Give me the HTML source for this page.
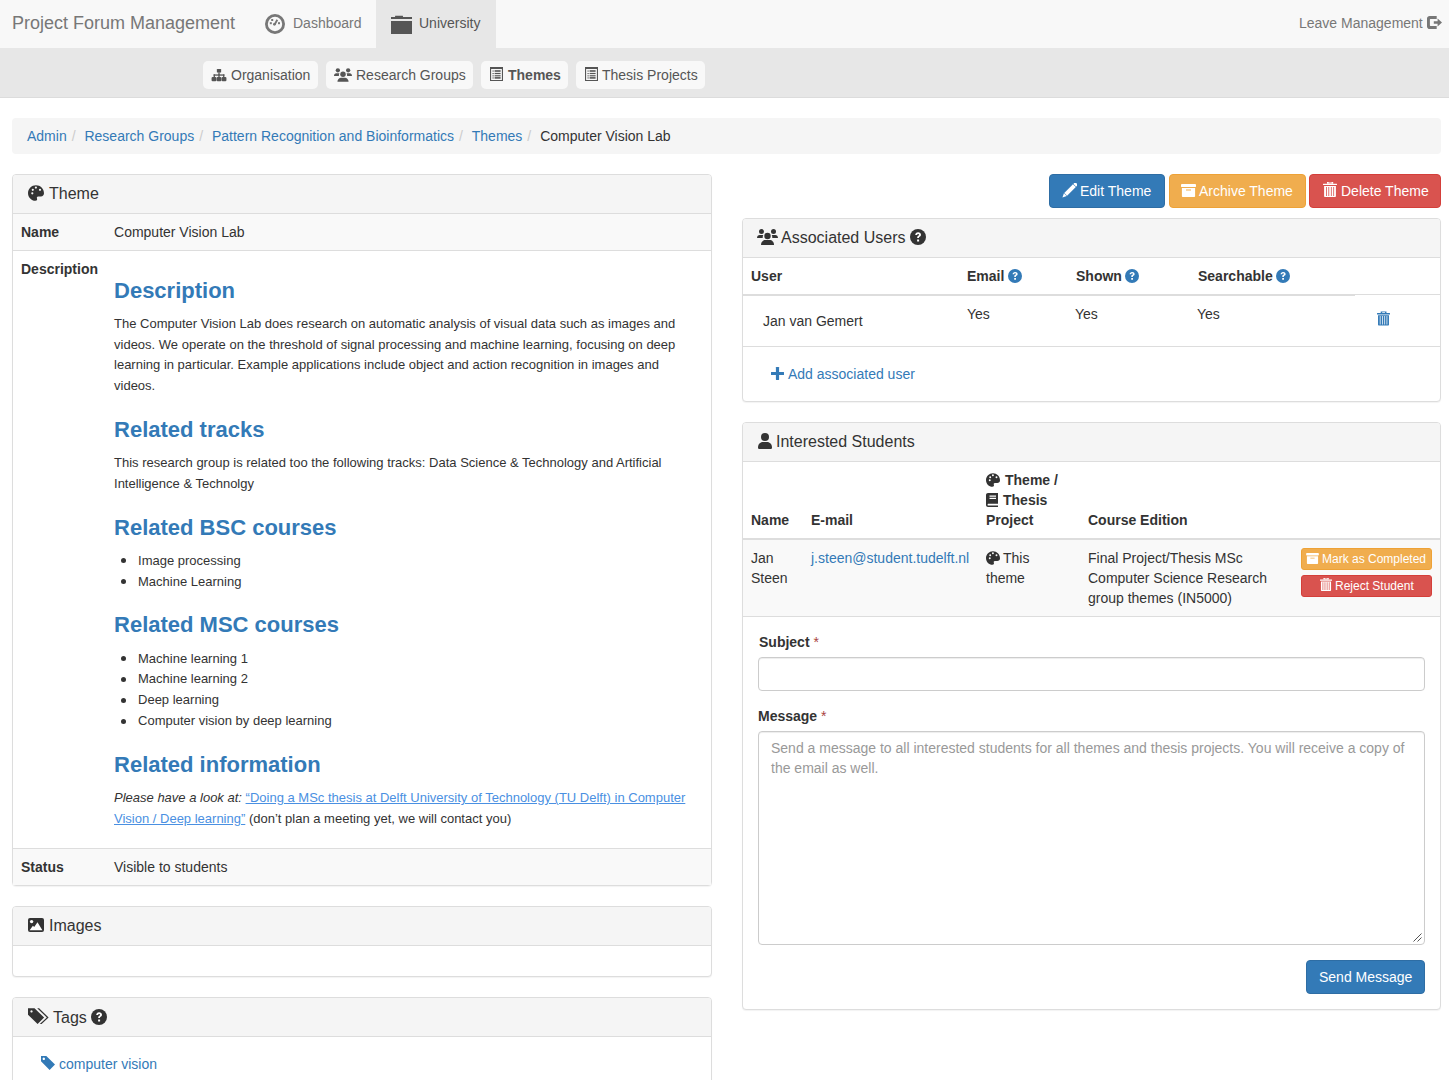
<!DOCTYPE html>
<html><head><meta charset="utf-8"><title>Computer Vision Lab</title>
<style>
*{box-sizing:border-box}
html,body{margin:0;padding:0}
body{font-family:"Liberation Sans",sans-serif;font-size:14px;line-height:20px;color:#333;background:#fff;width:1449px;height:1080px;overflow:hidden;position:relative}
a{color:#337ab7;text-decoration:none}
svg{display:block}
.abs{position:absolute}
.ic{position:absolute}
/* top nav */
#topnav{position:absolute;left:0;top:0;width:1449px;height:48px;background:#f8f8f8}
#topnav .t{position:absolute;top:13px;color:#777;white-space:nowrap}
#subnav{position:absolute;left:0;top:48px;width:1449px;height:50px;background:#e7e7e7;border-bottom:1px solid #dcdcdc}
.pill{position:absolute;top:13px;height:28px;background:#f8f8f8;border-radius:5px;color:#555;white-space:nowrap}
.pill .t{position:absolute;top:4px}
/* breadcrumb */
#bc{position:absolute;left:12px;top:118px;width:1429px;height:36px;background:#f5f5f5;border-radius:4px;padding:8px 15px;white-space:nowrap}
#bc span.sep{color:#ccc;padding:0 5px}
#bc .act{color:#333}
/* panels */
.panel{position:absolute;border:1px solid #ddd;border-radius:4px;background:#fff;box-shadow:0 1px 1px rgba(0,0,0,.05)}
.ph{background:#f5f5f5;border-bottom:1px solid #ddd;padding:10px 15px;font-size:16px;line-height:17.6px;height:39px;position:relative;border-radius:3px 3px 0 0}
.ph .t{position:absolute;top:10px;white-space:nowrap}
table{border-collapse:collapse;border-spacing:0}
.tbl{width:100%}
.tbl th,.tbl td{padding:8px;vertical-align:top;text-align:left;line-height:20px}
.tbl th{font-weight:bold}
.striped{background:#f9f9f9}
.tbl td.desc{font-size:13px;line-height:20.8px}
.desc h2{font-size:22px;line-height:24.2px;color:#337ab7;font-weight:bold;margin:21px 0 11px}
.desc h2:first-child{margin-top:19.5px}
.desc p:last-child{margin-bottom:10.7px}
.desc p{margin:0 0 10px}
.desc ul{margin:0 0 10px;padding-left:24px;list-style:none}
.desc li{position:relative}
.desc li::before{content:"";position:absolute;left:-17px;top:7.5px;width:5px;height:5px;border-radius:50%;background:#333}
.desc a{text-decoration:underline;color:#4a90e2}
.btn{position:absolute;height:34px;border:1px solid;border-radius:4px;color:#fff;white-space:nowrap}
.btn .t{position:absolute;top:6px}
.q{display:inline-block;vertical-align:middle}
.bt>th,.bt>td{border-top:1px solid #ddd}
.b{font-weight:bold;white-space:nowrap}
.bxs{position:absolute;height:22px;border:1px solid;border-radius:3px;color:#fff;font-size:12px;line-height:18px;white-space:nowrap}
.bxs .t{position:absolute;top:1px}
.inp{position:absolute;border:1px solid #ccc;border-radius:4px;background:#fff;box-shadow:inset 0 1px 1px rgba(0,0,0,.075)}
</style></head><body>
<svg width="0" height="0" style="position:absolute">
<defs>
<symbol id="i-palette" viewBox="0 0 16 16"><path fill-rule="evenodd" d="M8 0.2C3.6 0.2 0 3.6 0 8c0 4.6 3.6 7.8 7.3 7.8c1.4 0 2.2-1 1.7-2.3c-.4-1-.1-2.1 1.1-2.1h2.8c1.8 0 3.1-1.3 3.1-3.2C16 3.6 12.4 0.2 8 0.2zM3.2 8.3a1.1 1.1 0 1 0 2.2 0a1.1 1.1 0 1 0-2.2 0zM3.7 4.8a1.1 1.1 0 1 0 2.2 0a1.1 1.1 0 1 0-2.2 0zM6.8 2.6a1.1 1.1 0 1 0 2.2 0a1.1 1.1 0 1 0-2.2 0zM10.9 4.8a1.1 1.1 0 1 0 2.2 0a1.1 1.1 0 1 0-2.2 0z"/></symbol>
<symbol id="i-users" viewBox="0 0 21 16"><circle cx="4.5" cy="2.6" r="2.5"/><circle cx="16.5" cy="2.6" r="2.5"/><circle cx="10.5" cy="7" r="3.2"/><path d="M0 9.1c0-1.7 1.2-3 2.7-3h3.6c-.4.6-.6 1.4-.6 2.2c0 .3 0 .5.1.8z"/><path d="M21 9.1c0-1.7-1.2-3-2.7-3h-3.6c.4.6.6 1.4.6 2.2c0 .3 0 .5-.1.8z"/><path d="M4 15.9c0-2.7 1.9-4.8 4.3-4.8h4.4c2.4 0 4.3 2.1 4.3 4.8z"/></symbol>
<symbol id="i-sitemap" viewBox="0 0 16 14"><rect x="5.7" y="0" width="4.6" height="3.8" rx=".6"/><rect x="7.3" y="3.5" width="1.4" height="3"/><rect x="2.2" y="5.8" width="11.6" height="1.4"/><rect x="2.2" y="5.8" width="1.4" height="3.2"/><rect x="12.4" y="5.8" width="1.4" height="3.2"/><rect x="7.3" y="6" width="1.4" height="3"/><rect x="0" y="8.6" width="5.2" height="4.6" rx="1.2"/><rect x="5.4" y="8.6" width="5.2" height="4.6" rx="1.2"/><rect x="10.8" y="8.6" width="5.2" height="4.6" rx="1.2"/></symbol>
<symbol id="i-listalt" viewBox="0 0 13 14"><path fill-rule="evenodd" d="M0 0h13v14H0zM1.1 1.9v11h10.8v-11z"/><rect x="2.5" y="3.5" width="1.2" height="1.1"/><rect x="4.6" y="3.2" width="6" height="1.6"/><rect x="2.5" y="6" width="1.2" height="1.1"/><rect x="4.6" y="5.9" width="6" height="1.2"/><rect x="2.5" y="8.3" width="1.2" height="1.1"/><rect x="4.6" y="8.2" width="6" height="1.2"/><rect x="2.5" y="10.4" width="1.2" height="1.1"/><rect x="4.6" y="10.1" width="6" height="1.6"/></symbol>
<symbol id="i-qc" viewBox="0 0 16 16"><circle cx="8" cy="8" r="8"/><path fill="#fff" d="M5.2 6.1c0-1.7 1.3-2.8 2.9-2.8c1.7 0 2.9 1 2.9 2.4c0 1.2-.7 1.7-1.4 2.1c-.5.3-.6.5-.6.9v.4H7.2v-.6c0-1 .5-1.4 1.1-1.8c.5-.3.8-.5.8-.9c0-.5-.4-.8-1-.8c-.6 0-1 .4-1.1 1.1zM7.1 10.4h2v2h-2z"/></symbol>
<symbol id="i-trash" viewBox="0 0 14 16"><path fill-rule="evenodd" d="M4.6 0.2h4.8l.5 1.4H14v1.5H0V1.6h4.1zM1 4h12v11c0 .6-.4 1-1 1H2c-.6 0-1-.4-1-1zM3.3 5.6v8.8h1.2V5.6zM6.4 5.6v8.8h1.2V5.6zM9.5 5.6v8.8h1.2V5.6z"/></symbol>
<symbol id="i-trashl" viewBox="0 0 14 15"><path fill-rule="evenodd" d="M4 0h6.2v1.8H4zM5.6 .6v.6h3v-.6z"/><rect x="0" y="1.7" width="14" height="1.4" rx=".3"/><path fill-rule="evenodd" d="M1.1 3.9h11.8v10.3c0 .5-.3.8-.8.8H1.9c-.5 0-.8-.3-.8-.8zM3 4.9v9h.8v-9zM5.4 4.9v9h.8v-9zM7.9 4.9v9h.8v-9zM10.3 4.9v9h.8v-9z"/></symbol>
<symbol id="i-archive" viewBox="0 0 15 13"><rect x="0" y="0" width="15" height="3.1" rx=".9"/><path fill-rule="evenodd" d="M0.9 3.9h13.2v8.3c0 .5-.4.8-.8.8H1.7c-.5 0-.8-.4-.8-.8zM5 5.5h5v1H5z"/></symbol>
<symbol id="i-pencil" viewBox="0 0 15 15"><g transform="translate(7.5 7.5) rotate(45)"><rect x="-2" y="-10" width="4" height="2.6" rx=".6"/><rect x="-2" y="-6.9" width="4" height="12.3"/><path d="M-2 5.9h4L0 10z"/></g></symbol>
<symbol id="i-plus" viewBox="0 0 13 13"><rect x="4.9" y="0" width="3.2" height="13" rx=".4"/><rect x="0" y="4.9" width="13" height="3.2" rx=".4"/></symbol>
<symbol id="i-user" viewBox="0 0 14 16"><circle cx="7" cy="4" r="4"/><path d="M0 14.4c0-3 2.2-5.3 4.9-5.3h4.2c2.7 0 4.9 2.3 4.9 5.3c0 .9-.7 1.6-1.5 1.6H1.5C.7 16 0 15.3 0 14.4z"/></symbol>
<symbol id="i-book" viewBox="0 0 12 14"><path fill-rule="evenodd" d="M2 0h10v10.8H2.6c-.7 0-1 .4-1 .9s.3.9 1 .9H12V14H2c-1.1 0-2-.9-2-2V2C0 .9.9 0 2 0zM3.5 2.6v1.2h6.5V2.6zM3.5 4.8V6h6.5V4.8z"/></symbol>
<symbol id="i-image" viewBox="0 0 16 14"><rect x="0" y="0" width="16" height="14" rx="2"/><circle cx="3.6" cy="3.6" r="1.7" fill="#fff"/><path d="M1.6 12.2L4.9 7.8l1.3 1.3L9.5 4.3l4.9 7.9z" fill="#fff"/></symbol>
<symbol id="i-tags" viewBox="0 0 21 17"><path fill-rule="evenodd" d="M0 0.2h6.5l9.6 9.4-6.5 6.4L0 6.7zM3.5 2.3a1.1 1.1 0 1 0 .01 0z"/><path d="M9.2 0.2h1.9l9.5 9.4-7 6.4h-1.8l7-6.4z"/></symbol>
<symbol id="i-tag" viewBox="0 0 14 14"><path fill-rule="evenodd" d="M0 0h5.3l8.7 8.6-5.4 5.4L0 5.3zM2.8 1.6a1.2 1.2 0 1 0 .01 0z"/></symbol>
<symbol id="i-folder" viewBox="0 0 21 19"><path d="M4.2 0.8h7.6l.3 1.1H21v2H0v-2h4z"/><rect x="0" y="6" width="21" height="13"/></symbol>
<symbol id="i-gauge" viewBox="0 0 20 20"><circle cx="10" cy="10" r="8.6" fill="none" stroke="currentColor" stroke-width="2.8"/><rect x="6.2" y="5" width="2" height="2"/><rect x="4.8" y="8.2" width="2" height="2"/><rect x="13" y="8.2" width="2" height="2"/><path d="M9.6 10.4L12.3 5.8" stroke="currentColor" stroke-width="1.9"/><circle cx="9.4" cy="10.3" r="1.4"/></symbol>
<symbol id="i-signout" viewBox="0 0 15 13"><path d="M2.6 0h7.1v2.9H3.4c-.3 0-.5.2-.5.5v6.2c0 .3.2.5.5.5h6.3V13H2.6C1.2 13 0 11.8 0 10.4V2.6C0 1.2 1.2 0 2.6 0z"/><path d="M6.8 5.2h3.8V2.6l4.4 3.9-4.4 3.9V7.8H6.8z"/></symbol>
</defs></svg>

<!-- TOP NAV -->
<div id="topnav">
  <div class="t" style="left:12px;font-size:18px">Project Forum Management</div>
  <svg class="ic" style="left:265px;top:14px;color:#777;fill:#777" width="20" height="20"><use href="#i-gauge"/></svg>
  <div class="t" style="left:293px">Dashboard</div>
  <div class="abs" style="left:376px;top:0;width:120px;height:48px;background:#e7e7e7"></div>
  <svg class="ic" style="left:391px;top:15px;fill:#555" width="21" height="19"><use href="#i-folder"/></svg>
  <div class="t" style="left:419px;color:#555">University</div>
  <div class="t" style="left:1299px">Leave Management</div>
  <svg class="ic" style="left:1427px;top:16px;fill:#777" width="15" height="13"><use href="#i-signout"/></svg>
</div>

<!-- SUB NAV -->
<div id="subnav">
  <div class="pill" style="left:203px;width:115px">
    <svg class="ic" style="left:8px;top:8px;fill:#555" width="16" height="13"><use href="#i-sitemap"/></svg>
    <div class="t" style="left:28px">Organisation</div>
  </div>
  <div class="pill" style="left:326px;width:147px">
    <svg class="ic" style="left:8px;top:7px;fill:#555" width="18" height="14"><use href="#i-users"/></svg>
    <div class="t" style="left:30px">Research Groups</div>
  </div>
  <div class="pill" style="left:481px;width:87px">
    <svg class="ic" style="left:9px;top:6px;fill:#555" width="13" height="14"><use href="#i-listalt"/></svg>
    <div class="t" style="left:27px;font-weight:bold">Themes</div>
  </div>
  <div class="pill" style="left:576px;width:129px">
    <svg class="ic" style="left:9px;top:6px;fill:#555" width="13" height="14"><use href="#i-listalt"/></svg>
    <div class="t" style="left:26px">Thesis Projects</div>
  </div>
</div>

<!-- BREADCRUMB -->
<div id="bc"><a href="#">Admin</a><span class="sep">/&nbsp;</span><a href="#">Research Groups</a><span class="sep">/&nbsp;</span><a href="#">Pattern Recognition and Bioinformatics</a><span class="sep">/&nbsp;</span><a href="#">Themes</a><span class="sep">/&nbsp;</span><span class="act">Computer Vision Lab</span></div>

<!-- LEFT -->
<!--LEFT-->
<div class="panel" style="left:12px;top:174px;width:700px;height:712px">
  <div class="ph"><svg class="ic" style="left:15px;top:10px;fill:#333" width="16" height="16"><use href="#i-palette"/></svg><div class="t" style="left:36px">Theme</div></div>
  <table class="tbl ltbl">
    <tr class="striped"><th style="width:93px">Name</th><td>Computer Vision Lab</td></tr>
    <tr class="bt"><th>Description</th><td class="desc">
      <h2>Description</h2>
      <p>The Computer Vision Lab does research on automatic analysis of visual data such as images and videos. We operate on the threshold of signal processing and machine learning, focusing on deep learning in particular. Example applications include object and action recognition in images and videos.</p>
      <h2>Related tracks</h2>
      <p>This research group is related too the following tracks: Data Science &amp; Technology and Artificial Intelligence &amp; Technolgy</p>
      <h2>Related BSC courses</h2>
      <ul><li>Image processing</li><li>Machine Learning</li></ul>
      <h2>Related MSC courses</h2>
      <ul><li>Machine learning 1</li><li>Machine learning 2</li><li>Deep learning</li><li>Computer vision by deep learning</li></ul>
      <h2>Related information</h2>
      <p><em>Please have a look at:</em> <a href="#">“Doing a MSc thesis at Delft University of Technology (TU Delft) in Computer Vision / Deep learning”</a> (don’t plan a meeting yet, we will contact you)</p>
    </td></tr>
    <tr class="striped bt"><th>Status</th><td>Visible to students</td></tr>
  </table>
</div>
<div class="panel" style="left:12px;top:906px;width:700px;height:71px">
  <div class="ph"><svg class="ic" style="left:15px;top:11px;fill:#333" width="16" height="14"><use href="#i-image"/></svg><div class="t" style="left:36px">Images</div></div>
</div>
<div class="panel" style="left:12px;top:997px;width:700px;height:120px">
  <div class="ph"><svg class="ic" style="left:15px;top:10px;fill:#333" width="21" height="17"><use href="#i-tags"/></svg><div class="t" style="left:40px;top:11px">Tags</div><svg class="ic" style="left:78px;top:11px;fill:#333" width="16" height="16"><use href="#i-qc"/></svg></div>
  <div class="abs" style="left:28px;top:59px;white-space:nowrap"><svg class="ic" style="left:0;top:-1px;fill:#337ab7" width="14" height="14"><use href="#i-tag"/></svg><a href="#" style="position:absolute;left:18px;top:-3px">computer vision</a></div>
</div>
<!--/LEFT-->

<!-- RIGHT -->
<!--RIGHT-->
<div class="btn" style="left:1049px;top:174px;width:116px;background:#337ab7;border-color:#2e6da4">
  <svg class="ic" style="left:12px;top:8px;fill:#fff" width="15" height="15"><use href="#i-pencil"/></svg><div class="t" style="left:30px">Edit Theme</div></div>
<div class="btn" style="left:1169px;top:174px;width:137px;background:#f0ad4e;border-color:#eea236">
  <svg class="ic" style="left:11px;top:9px;fill:#fff" width="15" height="13"><use href="#i-archive"/></svg><div class="t" style="left:29px">Archive Theme</div></div>
<div class="btn" style="left:1309px;top:174px;width:132px;background:#d9534f;border-color:#d43f3a">
  <svg class="ic" style="left:13px;top:7px;fill:#fff" width="14" height="15"><use href="#i-trashl"/></svg><div class="t" style="left:31px">Delete Theme</div></div>

<div class="panel" style="left:742px;top:218px;width:699px;height:184px">
  <div class="ph"><svg class="ic" style="left:14px;top:10px;fill:#333" width="21" height="16"><use href="#i-users"/></svg><div class="t" style="left:38px">Associated Users</div><svg class="ic" style="left:167px;top:10px;fill:#333" width="16" height="16"><use href="#i-qc"/></svg></div>
  <div class="abs" style="left:0;top:75px;width:612px;height:2px;background:#ddd"></div>
  <div class="abs" style="left:612px;top:75px;width:85px;height:1px;background:#ddd"></div>
  <div class="abs" style="left:0;top:127px;width:697px;height:1px;background:#ddd"></div>
  <div class="abs b" style="left:8px;top:47px">User</div>
  <div class="abs b" style="left:224px;top:47px">Email</div><svg class="ic" style="left:265px;top:50px;fill:#337ab7" width="14" height="14"><use href="#i-qc"/></svg>
  <div class="abs b" style="left:333px;top:47px">Shown</div><svg class="ic" style="left:382px;top:50px;fill:#337ab7" width="14" height="14"><use href="#i-qc"/></svg>
  <div class="abs b" style="left:455px;top:47px">Searchable</div><svg class="ic" style="left:533px;top:50px;fill:#337ab7" width="14" height="14"><use href="#i-qc"/></svg>
  <div class="abs" style="left:20px;top:92px">Jan van Gemert</div>
  <div class="abs" style="left:224px;top:85px">Yes</div>
  <div class="abs" style="left:332px;top:85px">Yes</div>
  <div class="abs" style="left:454px;top:85px">Yes</div>
  <svg class="ic" style="left:634px;top:92px;fill:#337ab7" width="13" height="15" preserveAspectRatio="none"><use href="#i-trashl"/></svg>
  <svg class="ic" style="left:28px;top:148px;fill:#337ab7" width="13" height="13"><use href="#i-plus"/></svg>
  <a class="abs" href="#" style="left:45px;top:145px;white-space:nowrap">Add associated user</a>
</div>

<div class="panel" style="left:742px;top:422px;width:699px;height:588px">
  <div class="ph"><svg class="ic" style="left:15px;top:10px;fill:#333" width="14" height="16"><use href="#i-user"/></svg><div class="t" style="left:33px">Interested Students</div></div>
  <div class="abs" style="left:0;top:115px;width:697px;height:2px;background:#ddd"></div>
  <div class="abs striped" style="left:0;top:117px;width:697px;height:76px"></div>
  <div class="abs" style="left:0;top:193px;width:697px;height:1px;background:#ddd"></div>
  <div class="abs b" style="left:8px;top:87px">Name</div>
  <div class="abs b" style="left:68px;top:87px">E-mail</div>
  <div class="abs b" style="left:243px;top:47px;width:100px;line-height:20px">
    <div style="position:relative;padding-left:19px;white-space:nowrap"><svg class="ic" style="left:0;top:3px;fill:#333" width="14" height="14"><use href="#i-palette"/></svg>Theme /</div>
    <div style="position:relative;padding-left:17px;white-space:nowrap"><svg class="ic" style="left:0;top:3px;fill:#333" width="12" height="14"><use href="#i-book"/></svg>Thesis</div>
    <div>Project</div>
  </div>
  <div class="abs b" style="left:345px;top:87px">Course Edition</div>
  <div class="abs" style="left:8px;top:125px;line-height:20px">Jan<br>Steen</div>
  <a class="abs" href="#" style="left:68px;top:125px;white-space:nowrap">j.steen@student.tudelft.nl</a>
  <div class="abs" style="left:243px;top:125px;line-height:20px"><div style="position:relative;padding-left:17px"><svg class="ic" style="left:0;top:3px;fill:#333" width="14" height="14"><use href="#i-palette"/></svg>This</div>theme</div>
  <div class="abs" style="left:345px;top:125px;line-height:20px;white-space:nowrap">Final Project/Thesis MSc<br>Computer Science Research<br>group themes (IN5000)</div>
  <div class="bxs" style="left:558px;top:125px;width:131px;background:#f0ad4e;border-color:#eea236">
    <svg class="ic" style="left:4px;top:4px;fill:#fff" width="13" height="11" preserveAspectRatio="none"><use href="#i-archive"/></svg><div class="t" style="left:20px">Mark as Completed</div></div>
  <div class="bxs" style="left:558px;top:152px;width:131px;background:#d9534f;border-color:#d43f3a">
    <svg class="ic" style="left:18px;top:2px;fill:#fff" width="12" height="13" preserveAspectRatio="none"><use href="#i-trashl"/></svg><div class="t" style="left:33px">Reject Student</div></div>

  <div class="abs b" style="left:16px;top:209px">Subject <span style="color:#a94442;font-weight:normal">*</span></div>
  <div class="inp" style="left:15px;top:234px;width:667px;height:34px"></div>
  <div class="abs b" style="left:15px;top:283px">Message <span style="color:#a94442;font-weight:normal">*</span></div>
  <div class="inp" style="left:15px;top:308px;width:667px;height:214px"><div style="position:absolute;left:12px;top:6px;right:12px;color:#999;font-size:14px;line-height:20px">Send a message to all interested students for all themes and thesis projects. You will receive a copy of the email as well.</div>
    <svg class="ic" style="right:2px;bottom:2px" width="10" height="10"><path d="M1.5 9.5 L9.5 1.5 M5.5 9.5 L9.5 5.5" stroke="#555" stroke-width="1"/></svg></div>
  <div class="btn" style="left:563px;top:537px;width:119px;background:#337ab7;border-color:#2e6da4"><div class="t" style="left:12px">Send Message</div></div>
</div>
<!--/RIGHT-->

</body></html>
